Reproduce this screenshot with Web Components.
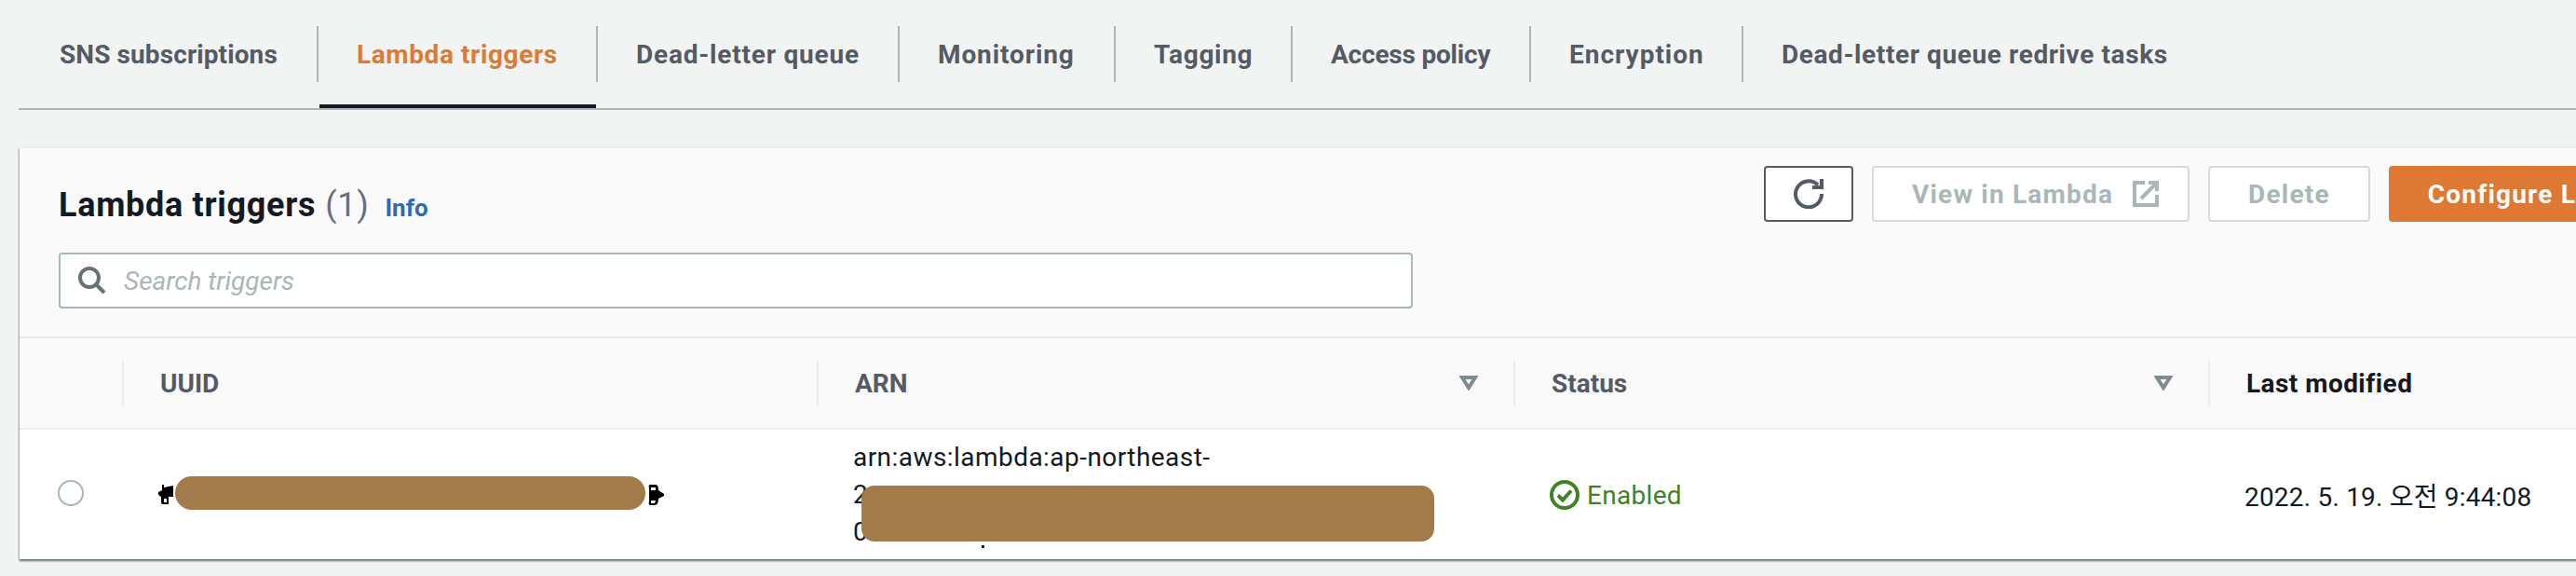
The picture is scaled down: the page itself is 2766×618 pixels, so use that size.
<!DOCTYPE html>
<html lang="ko">
<head>
<meta charset="utf-8">
<title>Lambda triggers</title>
<style>
    html, body { margin: 0; height: 100%; overflow: hidden; background: #f2f3f3; }
    body {
        font-family: Roboto, "Noto Sans CJK KR", sans-serif;
        font-size: 28px;
        color: #16191f;
    }
</style>
</head>
<body>

<aws-tabs>
    <aws-tab first style="letter-spacing:.1px">SNS subscriptions</aws-tab>
    <aws-tab active style="letter-spacing:.6px">Lambda triggers</aws-tab>
    <aws-tab style="letter-spacing:.8px">Dead-letter queue</aws-tab>
    <aws-tab style="letter-spacing:.9px">Monitoring</aws-tab>
    <aws-tab style="letter-spacing:.7px">Tagging</aws-tab>
    <aws-tab style="letter-spacing:-.2px">Access policy</aws-tab>
    <aws-tab style="letter-spacing:1px">Encryption</aws-tab>
    <aws-tab last style="letter-spacing:.6px">Dead-letter queue redrive tasks</aws-tab>
</aws-tabs>

<aws-card>
    <span slot="title">Lambda triggers</span>
    <span slot="count">(1)</span>
    <aws-button slot="actions" icon="refresh"></aws-button>
    <aws-button slot="actions" disabled icon="external">View in Lambda</aws-button>
    <aws-button slot="actions" disabled>Delete</aws-button>
    <aws-button slot="actions" primary>Configure Lambda function trigger</aws-button>

    <aws-table>
        <aws-th plain></aws-th>
        <aws-th>UUID</aws-th>
        <aws-th filter>ARN</aws-th>
        <aws-th filter>Status</aws-th>
        <aws-th strong style="letter-spacing:.45px">Last modified</aws-th>

        <aws-td first><aws-radio></aws-radio></aws-td>
        <aws-td>
            <aws-redaction style="left:57px;top:50px;width:505px;height:36px;border-radius:18px" marks></aws-redaction>
        </aws-td>
        <aws-td>
            <div style="line-height:40px;letter-spacing:.45px">arn:aws:lambda:ap-northeast-<br>2<br>0</div>
            <aws-redaction dot style="left:48px;top:60px;width:615px;height:60px;border-radius:14px"></aws-redaction>
        </aws-td>
        <aws-td><aws-status style="letter-spacing:.3px">Enabled</aws-status></aws-td>
        <aws-td style="letter-spacing:.2px">2022. 5. 19. 오전 9:44:08</aws-td>
    </aws-table>
</aws-card>

<script>
const ICONS = {
    refresh: `<svg width="32" height="32" viewBox="0 0 32 32" fill="none" stroke="currentColor" stroke-width="4">
        <path d="M26 6.5A14 14 0 1 0 30 16"/><path d="M20 9H30V0"/></svg>`,
    external: `<svg width="28" height="28" viewBox="0 0 28 28" fill="none" stroke="currentColor" stroke-width="4">
        <path d="M13 2H2V26H26V15"/><path d="M17 2H26V11"/><path d="M9 19L25 3"/></svg>`
};

class AwsTabs extends HTMLElement {
    constructor() {
        super();
        this.attachShadow({ mode: 'open' }).innerHTML = `
            <style>
                :host {
                    display: grid;
                    grid-template-columns: 322px 300px 324px 232px 190px 256px 228px 1fr;
                    margin-left: 20px;
                    border-bottom: 2px solid #aab7b8;
                }
            </style>
            <slot></slot>`;
    }
}

class AwsTab extends HTMLElement {
    constructor() {
        super();
        this.attachShadow({ mode: 'open' }).innerHTML = `
            <style>
                :host {
                    display: block;
                    padding-top: 28px;
                    font-weight: 700;
                    color: #545b64;
                    white-space: nowrap;
                }
                :host([active]) { color: #df7a35; }
                .label {
                    height: 60px;
                    display: flex;
                    align-items: center;
                    padding-left: 41px;
                    border-right: 2px solid #aab7b8;
                }
                :host([first]) .label { padding-left: 44px; }
                :host([last]) .label { border-right: 0; }
                .bar { height: 4px; margin: 24px 2px 0 1px; }
                :host([active]) .bar { background: #16191f; }
            </style>
            <div class="label"><slot></slot></div>
            <div class="bar"></div>`;
    }
}

class AwsCard extends HTMLElement {
    constructor() {
        super();
        this.attachShadow({ mode: 'open' }).innerHTML = `
            <style>
                :host {
                    display: block;
                    width: 2800px;
                    margin: 41px 0 0 21px;
                    background: #fff;
                    box-shadow: 0 2px 2px rgba(0,28,36,.55), -1px 1px 2px rgba(0,28,36,.2);
                }
                header {
                    display: grid;
                    grid-template-columns: 1831px auto;
                    padding: 19px 0 30px 42px;
                    background: #fafafa;
                    border-top: 1px solid #eaeded;
                    margin-top: -1px;
                    border-bottom: 2px solid #eaeded;
                }
                .title {
                    height: 44px;
                    margin: 20px 0 29px;
                    display: flex;
                    align-items: baseline;
                    font-size: 36px;
                    line-height: 44px;
                    font-weight: 700;
                    letter-spacing: .7px;
                }
                .count { margin-left: 10px; font-weight: 400; color: #687078; }
                .info {
                    margin-left: 17px;
                    font-size: 26px;
                    font-weight: 700;
                    letter-spacing: 0;
                    color: #2a6db5;
                }
                .search {
                    box-sizing: border-box;
                    width: 1454px;
                    height: 60px;
                    display: flex;
                    align-items: center;
                    gap: 19px;
                    padding-left: 19px;
                    background: #fff;
                    border: 2px solid #aab7b8;
                    border-radius: 4px;
                    color: #aab7b8;
                    font-style: italic;
                }
                .search svg { flex: none; color: #687078; }
                .actions { display: flex; gap: 20px; align-items: flex-start; }
            </style>
            <header>
                <div>
                    <div class="title">
                        <slot name="title"></slot>
                        <span class="count"><slot name="count"></slot></span>
                        <span class="info">Info</span>
                    </div>
                    <div class="search">
                        <svg width="30" height="30" viewBox="0 0 30 30" fill="none" stroke="currentColor" stroke-width="4">
                            <circle cx="12" cy="12" r="10"/><path d="M19 19L28 28"/>
                        </svg>
                        <span>Search triggers</span>
                    </div>
                </div>
                <div class="actions"><slot name="actions"></slot></div>
            </header>
            <slot></slot>`;
    }
}

class AwsButton extends HTMLElement {
    constructor() {
        super();
        this.attachShadow({ mode: 'open' });
    }

    connectedCallback() {
        const icon = ICONS[this.getAttribute('icon')] || '';
        this.shadowRoot.innerHTML = `
            <style>
                :host {
                    display: inline-flex;
                    align-items: center;
                    gap: 21px;
                    box-sizing: border-box;
                    height: 60px;
                    padding: 0 41px;
                    flex: none;
                    font-weight: 700;
                    letter-spacing: 1.2px;
                    white-space: nowrap;
                    border-radius: 4px;
                    background: #fff;
                    border: 2px solid #545b64;
                    color: #545b64;
                }
                :host([icon="refresh"]) { padding: 0 30px; }
                :host([icon="external"]) { padding: 0 31px 0 41px; }
                :host([disabled]) {
                    border-color: #d5dbdb;
                    color: #aab7b8;
                }
                :host([primary]) {
                    background: #dd7932;
                    border-color: #dd7932;
                    color: #fff;
                    padding: 0 40px;
                }
                svg { display: block; }
            </style>
            <slot></slot>${icon}`;
    }
}

class AwsTable extends HTMLElement {
    constructor() {
        super();
        this.attachShadow({ mode: 'open' }).innerHTML = `
            <style>
                :host {
                    display: grid;
                    grid-template-columns: 110px 746px 748px 746px 1fr;
                }
            </style>
            <slot></slot>`;
    }
}

class AwsTh extends HTMLElement {
    constructor() {
        super();
        this.attachShadow({ mode: 'open' });
    }

    connectedCallback() {
        const filter = this.hasAttribute('filter')
            ? `<svg width="20" height="16" viewBox="0 0 20 16" fill="none" stroke="#7f8c8d" stroke-width="4">
                   <path d="M3 2H17L10 13Z"/>
               </svg>`
            : '';
        this.shadowRoot.innerHTML = `
            <style>
                :host {
                    display: block;
                    box-sizing: border-box;
                    height: 98px;
                    padding-top: 24px;
                    background: #fafafa;
                    border-bottom: 2px solid #eaeded;
                    font-weight: 700;
                    color: #545b64;
                }
                :host([strong]) { color: #16191f; }
                .inner {
                    height: 48px;
                    display: flex;
                    align-items: center;
                    justify-content: space-between;
                    padding: 0 38px 0 39px;
                    border-left: 2px solid #eaeded;
                }
                :host([plain]) .inner { border-left: 0; }
            </style>
            <div class="inner"><span><slot></slot></span>${filter}</div>`;
    }
}

class AwsTd extends HTMLElement {
    constructor() {
        super();
        this.attachShadow({ mode: 'open' }).innerHTML = `
            <style>
                :host {
                    position: relative;
                    display: flex;
                    align-items: center;
                    box-sizing: border-box;
                    height: 139px;
                    padding-left: 39px;
                    overflow: hidden;
                    white-space: nowrap;
                }
                :host([first]) { padding-left: 41px; }
            </style>
            <slot></slot>`;
    }
}

class AwsRadio extends HTMLElement {
    constructor() {
        super();
        this.attachShadow({ mode: 'open' }).innerHTML = `
            <style>
                :host {
                    display: block;
                    box-sizing: border-box;
                    width: 28px;
                    height: 28px;
                    margin-top: -3px;
                    border: 2px solid #aab7b8;
                    border-radius: 50%;
                    background: #fff;
                }
            </style>`;
    }
}

class AwsStatus extends HTMLElement {
    constructor() {
        super();
        this.attachShadow({ mode: 'open' }).innerHTML = `
            <style>
                :host {
                    display: inline-flex;
                    align-items: center;
                    gap: 8px;
                    margin-top: 1px;
                    color: #3f8324;
                }
            </style>
            <svg width="32" height="32" viewBox="0 0 32 32" fill="none" stroke="currentColor" stroke-width="4">
                <circle cx="16" cy="16" r="14"/><path d="M9 16.5L14 21.5L23 11.5"/>
            </svg>
            <slot></slot>`;
    }
}

/* paint-over blocks from the screenshot, they sit on top of the cell text */
class AwsRedaction extends HTMLElement {
    constructor() {
        super();
        this.attachShadow({ mode: 'open' });
    }

    connectedCallback() {
        const marks = this.hasAttribute('marks') ? `
            <svg class="m l" width="20" height="22" viewBox="0 0 20 22">
                <path d="M2 8L6 6V0H8V3L18 1V13H13V21H7Q5 21 5 19V13Q1 11 2 8ZM8 15V19H11V15Z"/>
            </svg>
            <svg class="m r" width="18" height="22" viewBox="0 0 18 22">
                <path d="M2 0H8Q11 0 11 6L17 10V12L11 15Q11 22 7 22H2Q0 22 1 18V4Q0 0 2 0ZM3 3V6H8V3ZM3 17V20H7L8 17Z"/>
            </svg>` : '';
        this.shadowRoot.innerHTML = `
            <style>
                :host {
                    position: absolute;
                    display: block;
                    background: #a37b4b;
                }
                :host([dot])::after {
                    content: '';
                    position: absolute;
                    left: 129px;
                    top: 64px;
                    width: 3px;
                    height: 3px;
                    background: #16191f;
                }
                .m { position: absolute; top: 9px; }
                .l { left: -20px; }
                .r { right: -21px; }
            </style>
            ${marks}`;
    }
}

customElements.define('aws-tabs', AwsTabs);
customElements.define('aws-tab', AwsTab);
customElements.define('aws-card', AwsCard);
customElements.define('aws-button', AwsButton);
customElements.define('aws-table', AwsTable);
customElements.define('aws-th', AwsTh);
customElements.define('aws-td', AwsTd);
customElements.define('aws-radio', AwsRadio);
customElements.define('aws-status', AwsStatus);
customElements.define('aws-redaction', AwsRedaction);
</script>
</body>
</html>
